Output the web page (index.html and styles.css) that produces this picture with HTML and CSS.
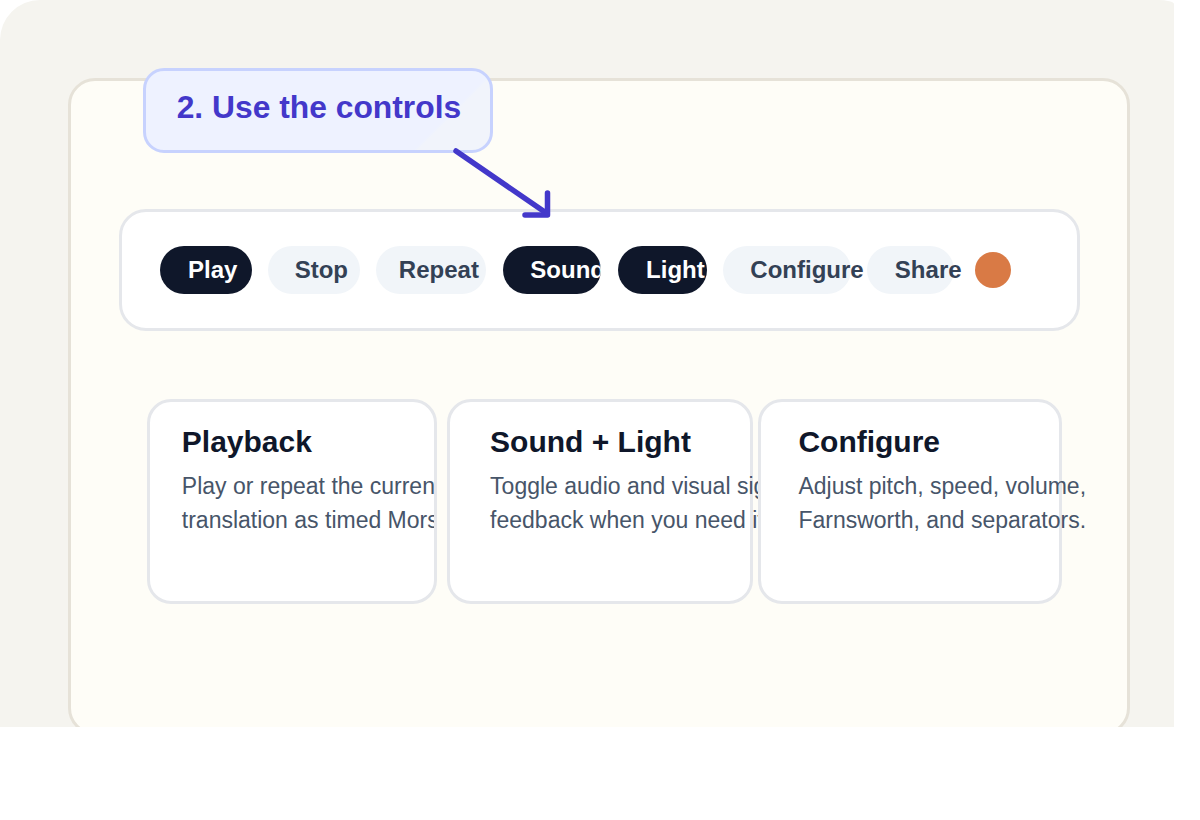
FILE: index.html
```html
<!DOCTYPE html>
<html lang="en">
<head>
<meta charset="utf-8">
<title>Controls</title>
<link rel="stylesheet" href="styles.css">
</head>
<body>
<div class="stage">
  <div class="callout">2. Use the controls</div>
  <svg class="arrow" width="130" height="90" viewBox="0 0 130 90" fill="none" stroke="#4338ca" stroke-width="5.5" stroke-linecap="round" stroke-linejoin="round">
    <line x1="16" y1="11" x2="107" y2="73.5"/>
    <polyline points="107.5,53 107.5,75 85,75"/>
  </svg>
  <div class="panel">
    <div class="toolbar">
      <span class="btn dark b-play">Play</span>
      <span class="btn light b-stop">Stop</span>
      <span class="btn light b-repeat">Repeat</span>
      <span class="btn dark b-sound">Sound</span>
      <span class="btn dark b-light">Light</span>
      <span class="btn light b-config">Configure</span>
      <span class="btn light b-share">Share</span>
      <span class="dot"></span>
    </div>
    <div class="cards">
      <div class="card c1">
        <h3 class="card-title">Playback</h3>
        <p class="card-text">Play or repeat the current translation as timed Morse.</p>
      </div>
      <div class="card c2">
        <h3 class="card-title">Sound + Light</h3>
        <p class="card-text">Toggle audio and visual signal feedback when you need it.</p>
      </div>
      <div class="card c3">
        <h3 class="card-title">Configure</h3>
        <p class="card-text">Adjust pitch, speed, volume, Farnsworth, and separators.</p>
      </div>
    </div>
  </div>
</div>
</body>
</html>
```
FILE: styles.css
```css
* { box-sizing: border-box; }
html, body {
  margin: 0;
  padding: 0;
  background: #ffffff;
  font-family: "Liberation Sans", Arial, sans-serif;
}
.stage {
  position: relative;
  width: 1174px;
  height: 727px;
  background: #f5f4ef;
  border-radius: 40px 16px 0 0 / 40px 4px 0 0;
  overflow: hidden;
  padding: 78.3px 0 0 68.3px;
}
.panel {
  width: 1062px;
  height: 657px;
  background: #fefdf7;
  border: 3px solid #e6e2d8;
  border-radius: 27px;
  padding: 128px 0 0 48px;
}
.callout {
  position: absolute;
  left: 142.7px;
  top: 68.3px;
  height: 84.4px;
  padding: 17px 29px 0 31px;
  border: 3px solid #c7d2fe;
  border-radius: 21px;
  background: linear-gradient(135deg, #eef2ff 0%, #eef2ff 82%, #f1f4fb 83%, #f1f4fb 100%);
  color: #4338ca;
  font-weight: 700;
  font-size: 31.8px;
  line-height: 38px;
  white-space: nowrap;
  z-index: 2;
}
.arrow {
  position: absolute;
  left: 440px;
  top: 140px;
  z-index: 3;
}
.toolbar {
  width: 961px;
  height: 121.5px;
  background: #ffffff;
  border: 3px solid #e5e7eb;
  border-radius: 27px;
  padding: 0 0 0 37.7px;
  display: flex;
  align-items: center;
  gap: 16.5px;
}
.btn {
  flex: none;
  height: 48px;
  line-height: 48px;
  border-radius: 24px;
  font-size: 24px;
  font-weight: 700;
  white-space: nowrap;
}
.btn.dark {
  background: #0f172a;
  color: #ffffff;
  overflow: hidden;
}
.btn.light {
  background: #f1f5f9;
  color: #334155;
}
.b-play { width: 91.7px; padding-left: 28px; }
.b-stop { width: 91.7px; padding-left: 26.5px; }
.b-repeat { width: 110px; padding-left: 22.5px; }
.b-sound { width: 98.5px; padding-left: 27.5px; }
.b-light { width: 89px; padding-left: 28.2px; }
.b-config { width: 127.5px; padding-left: 27px; }
.b-share { width: 87px; padding-left: 27.5px; }
.dot {
  flex: none;
  width: 36px;
  height: 36px;
  border-radius: 50%;
  background: #d97a45;
  margin-left: 4px;
}
.cards {
  display: flex;
  margin-top: 68px;
  margin-left: 27.5px;
}
.card {
  flex: none;
  height: 205.5px;
  background: #ffffff;
  border: 3px solid #e5e7eb;
  border-radius: 24px;
  padding-top: 22.5px;
}
.c1 { width: 290px; padding-left: 32px; overflow: hidden; }
.c2 { width: 306.6px; padding-left: 40.3px; margin-left: 10px; }
.c3 { width: 303.4px; padding-left: 37px; margin-left: 5px; }
.card-title {
  margin: 0;
  font-size: 30px;
  line-height: 36px;
  font-weight: 700;
  color: #0f172a;
  white-space: nowrap;
}
.card-text {
  margin: 8.5px 0 0 0;
  width: 340px;
  font-size: 23px;
  line-height: 34px;
  color: #475569;
}
```
